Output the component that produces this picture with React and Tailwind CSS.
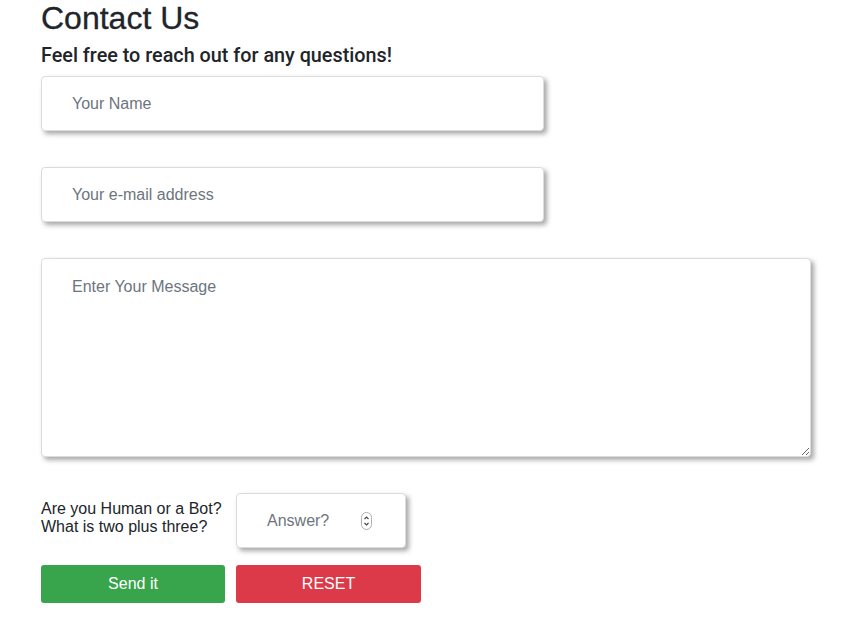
import { useState } from "react";

const boxShadow = "shadow-[3px_3px_5px_rgba(0,0,0,0.35)]";

// Eingabefeld mit Schatten
const Field = ({ placeholder, className = "" }) => (
  <input
    type="text"
    placeholder={placeholder}
    className={`block h-[55px] border border-[#dcdcdc] rounded-[4px] bg-white pl-[30px] pr-3 text-base text-[#495057] placeholder:text-[#6c757d] outline-none ${boxShadow} ${className}`}
  />
);

export default function App() {
  const [answer, setAnswer] = useState("");

  return (
    <div className="min-h-[624px] bg-white text-[#212529] font-['Liberation_Sans',Arial,sans-serif] pl-[41px]">
      <h1 className="text-[32px] leading-[38px] font-medium -mt-[1px] [-webkit-text-stroke:0.3px_#212529]">
        Contact Us
      </h1>
      <h2 className="font-['Roboto',Arial,sans-serif] text-[19.8px] leading-[24px] font-medium mt-[7px]">
        Feel free to reach out for any questions!
      </h2>

      <form className="flex flex-col mt-[8px]" onSubmit={(e) => e.preventDefault()}>
        <Field placeholder="Your Name" className="w-[503px]" />
        <Field placeholder="Your e-mail address" className="w-[503px] mt-[36px]" />
        <textarea
          placeholder="Enter Your Message"
          className={`block w-[770px] h-[199px] mt-[36px] border border-[#dcdcdc] rounded-[4px] bg-white pl-[30px] pt-[16px] text-base text-[#495057] placeholder:text-[#6c757d] outline-none ${boxShadow}`}
        />

        <div className="flex items-center mt-[36px]">
          <p className="w-[195px] text-base leading-[18px] text-[#212529] mb-[6px]">
            Are you Human or a Bot?
            <br />
            What is two plus three?
          </p>
          <div className="relative">
            <input
              type="text"
              value={answer}
              onChange={(e) => setAnswer(e.target.value)}
              placeholder="Answer?"
              className={`block w-[170px] h-[55px] border border-[#dcdcdc] rounded-[4px] bg-white pl-[30px] pr-8 text-base text-[#495057] placeholder:text-[#6c757d] outline-none ${boxShadow}`}
            />
            <div className="absolute left-[125px] top-[19px] w-[11px] h-[18px] rounded-full border border-[#b0b0b0] flex items-center justify-center">
              <svg width="7" height="14" viewBox="0 0 7 14" fill="none" stroke="#444" strokeWidth="1.1">
                <path d="M1.5 5 L3.5 3 L5.5 5" />
                <path d="M1.5 9 L3.5 11 L5.5 9" />
              </svg>
            </div>
          </div>
        </div>

        <div className="flex gap-[11px] mt-[17px]">
          <button
            type="submit"
            className="w-[184px] h-[38px] rounded-[3px] bg-[#38a44c] text-white text-base"
          >
            Send it
          </button>
          <button
            type="reset"
            onClick={() => setAnswer("")}
            className="w-[185px] h-[38px] rounded-[3px] bg-[#dc3949] text-white text-base"
          >
            RESET
          </button>
        </div>
      </form>
    </div>
  );
}
